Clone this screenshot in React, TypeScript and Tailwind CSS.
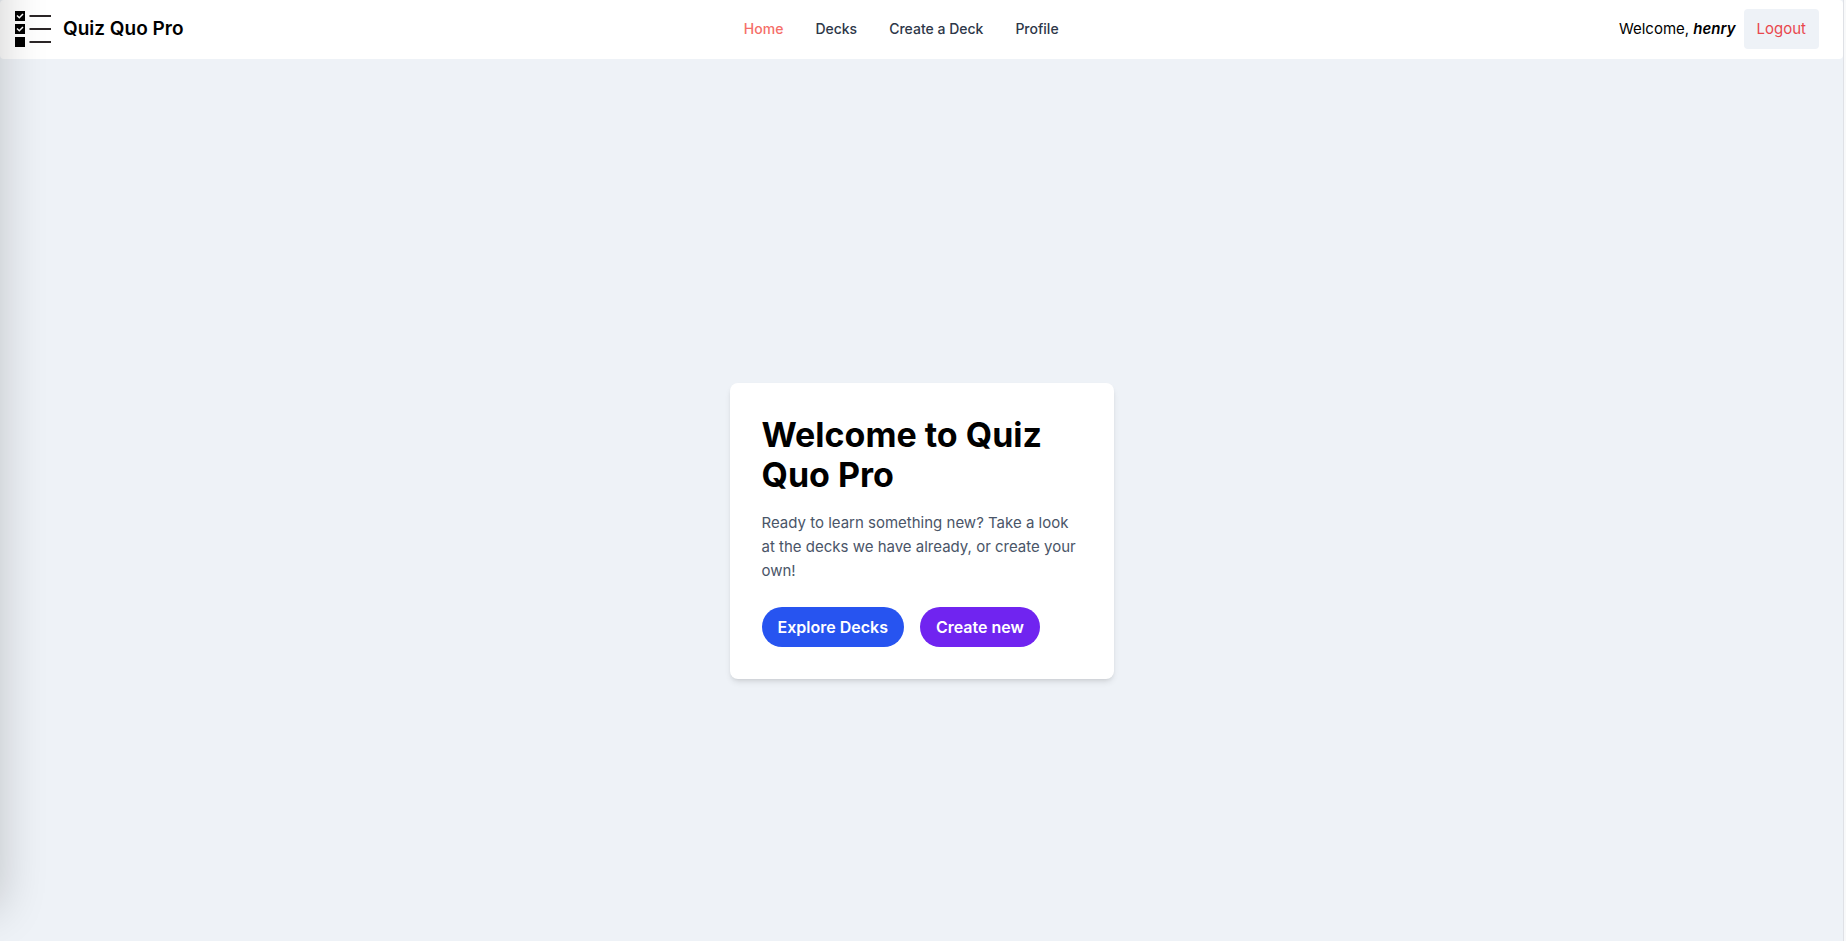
const navLinks = [
  { label: "Home", href: "#home", active: true },
  { label: "Decks", href: "#decks", active: false },
  { label: "Create a Deck", href: "#create", active: false },
  { label: "Profile", href: "#profile", active: false },
];

function Logo() {
  return (
    <svg className="h-9 w-9" viewBox="0 0 36 36" fill="none" aria-hidden="true">
      <path d="M0 0h10v10H0zM0 13h10v10H0zM0 26h10v10H0z" fill="#000" />
      <path
        d="M2 4.5 4.3 6.8 8 3M2 17.5l2.3 2.3L8 16"
        stroke="#fff"
        strokeWidth="1.5"
      />
      <path d="M14.5 5H36M14.5 18H36M14.5 31H36" stroke="#2b2627" strokeWidth="1.8" />
    </svg>
  );
}

function Header() {
  return (
    <header className="flex h-[59px] items-center justify-between rounded bg-white pr-6 pb-0.5 pl-[15px]">
      <a href="#home" className="flex items-center gap-3">
        <Logo />
        <span className="text-[19px] leading-8 font-semibold">Quiz Quo Pro</span>
      </a>
      <nav className="flex items-center gap-8 text-sm font-medium">
        {navLinks.map((link) => (
          <a
            key={link.label}
            href={link.href}
            className={link.active ? "text-[#f56e68]" : "text-[#2d3748]"}
          >
            {link.label}
          </a>
        ))}
      </nav>
      <div className="flex items-center gap-2 text-[15px] leading-6">
        <p>
          Welcome, <em className="font-semibold">henry</em>
        </p>
        <button type="button" className="rounded bg-[#eef2f7] px-[13px] py-2 text-[#e9474d]">
          Logout
        </button>
      </div>
    </header>
  );
}

function WelcomeCard() {
  return (
    <section className="w-full max-w-sm rounded-lg bg-white p-8 shadow-md">
      <h1 className="mb-4 text-[34px] leading-10 font-bold">Welcome to Quiz Quo Pro</h1>
      <p className="mb-6 text-[15px] leading-6 text-[#4a5568]">
        Ready to learn something new? Take a look at the decks we have already, or create your own!
      </p>
      <div className="flex gap-4">
        <button type="button" className="rounded-full bg-[#2754f0] px-4 py-2 font-semibold text-white">
          Explore Decks
        </button>
        <button type="button" className="rounded-full bg-[#7024f0] px-4 py-2 font-semibold text-white">
          Create new
        </button>
      </div>
    </section>
  );
}

export default function App() {
  return (
    <div className="relative flex min-h-screen overflow-hidden bg-[#f8f9fa] font-['Inter',sans-serif] text-black">
      <div className="flex flex-1 flex-col border-r border-[#dfe1e6] bg-[#eef2f7]">
        <Header />
        <main className="flex flex-1 items-center justify-center pt-[61px]">
          <WelcomeCard />
        </main>
      </div>
      <div className="w-0.5" />
      <div className="pointer-events-none absolute -top-16 bottom-8 -left-24 w-24 shadow-[0_0_48px_rgba(0,0,0,0.2)]" />
    </div>
  );
}
